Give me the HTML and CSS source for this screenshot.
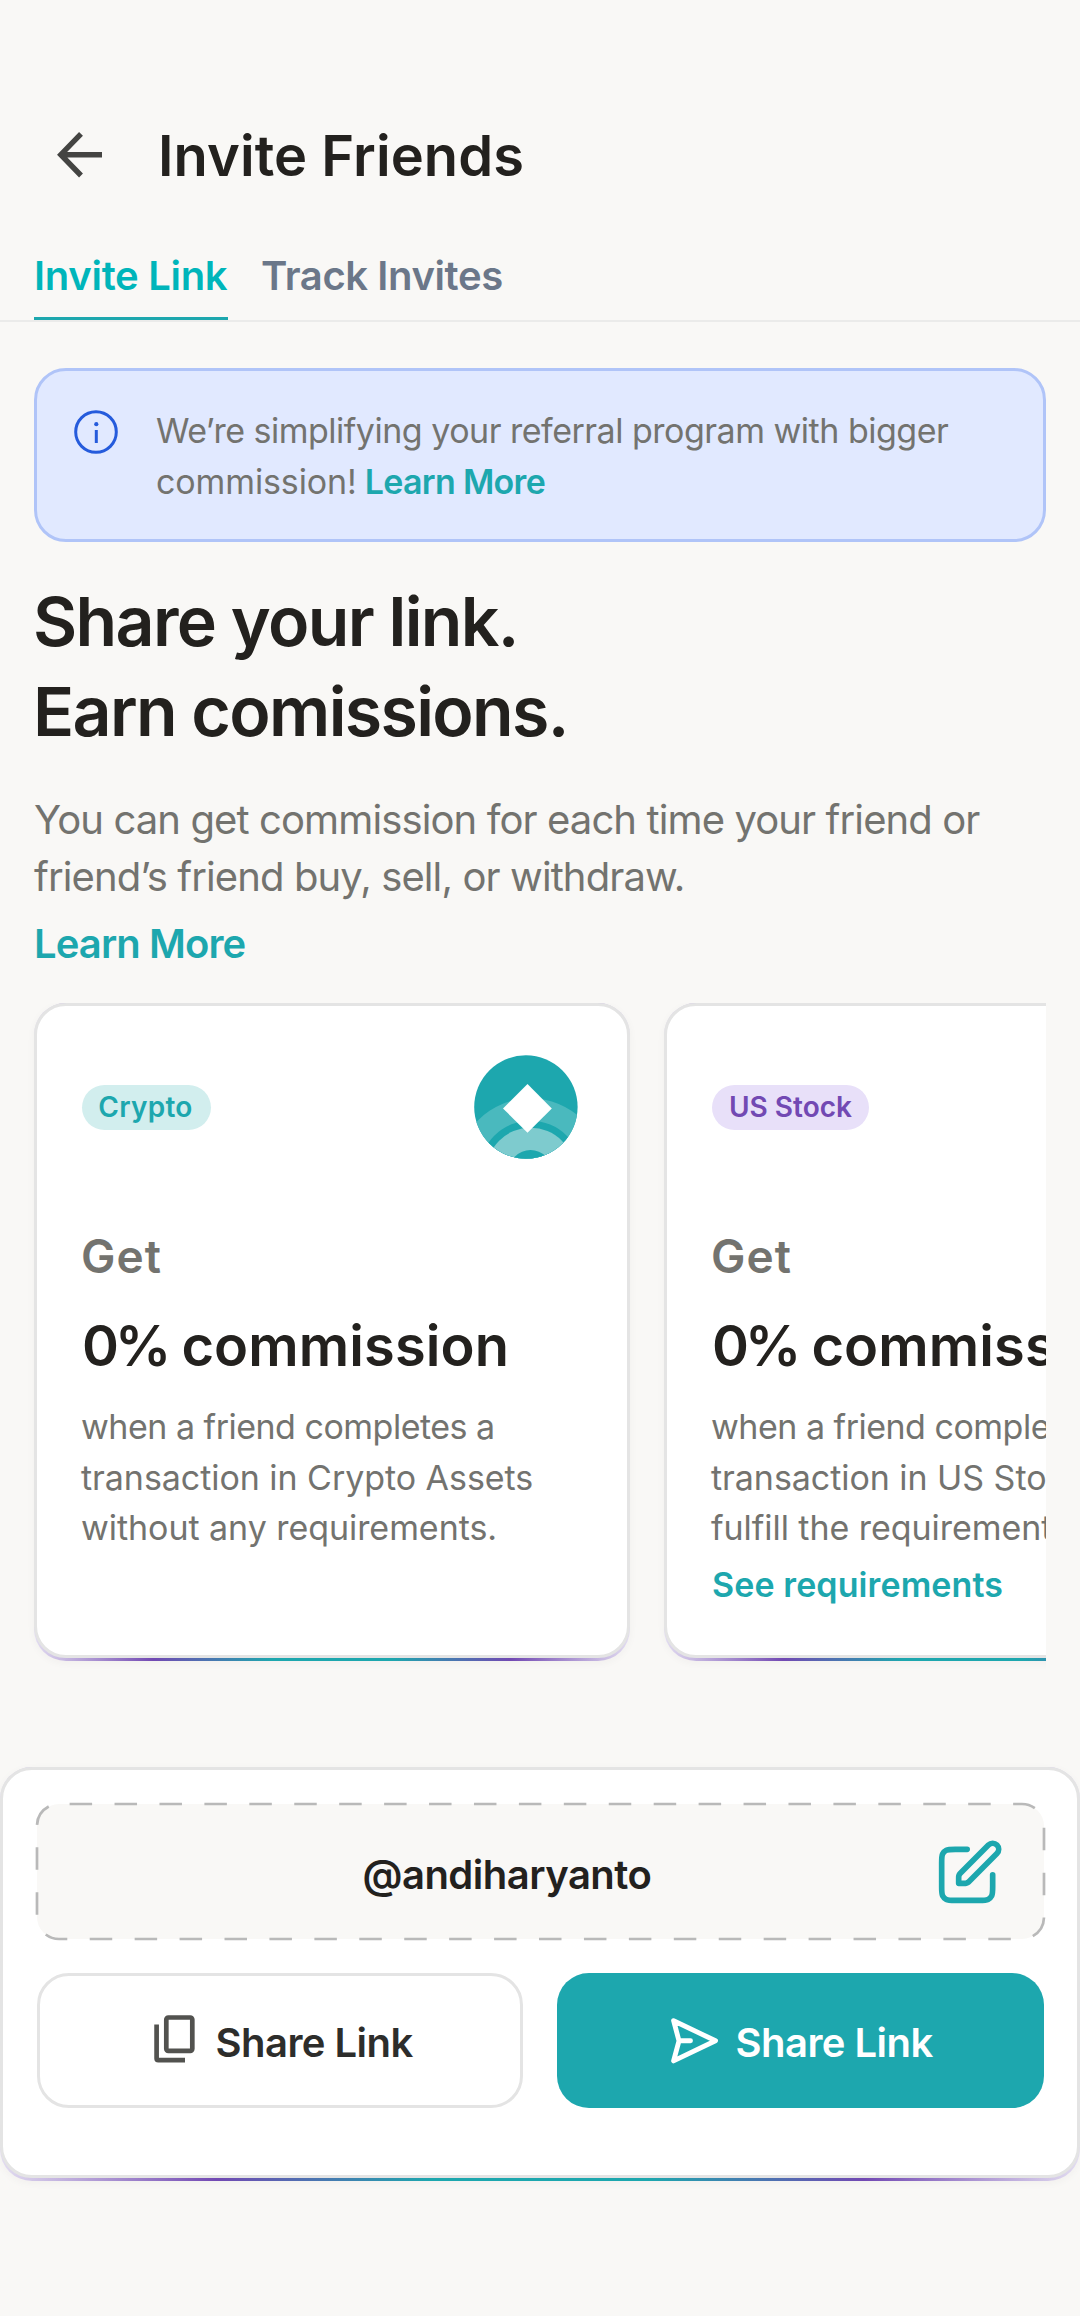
FILE: index.html
```
<!DOCTYPE html>
<html lang="en">
<head>
<meta charset="utf-8">
<title>Invite Friends</title>
<link rel="stylesheet" href="styles.css">
</head>
<body>
<header class="header">
  <svg class="back" viewBox="0 0 48 48" fill="none" stroke="#444442" stroke-width="5.4"><path d="M47 24.700H6M26 3.900 5.800 24.700 26 45.500"/></svg>
  <h1 class="title">Invite Friends</h1>
</header>

<nav class="tabs">
  <a class="tab tab-active">Invite Link</a>
  <a class="tab tab-track">Track Invites</a>
</nav>

<main class="content">
  <section class="banner">
    <svg class="info" viewBox="0 0 48 48" fill="none" stroke="#255bdc" stroke-width="3"><circle cx="24" cy="24" r="20.300"/><path d="M24.300 22v13"/><circle cx="24.300" cy="16.200" r="2.100" fill="#255bdc" stroke="none"/></svg>
    <p class="banner-text">We’re simplifying your referral program with bigger<br><span class="banner-end">commission!</span><a class="link banner-link">Learn More</a></p>
  </section>

  <h2 class="headline">Share your link.<br>Earn comissions.</h2>
  <p class="lead">You can get commission for each time your friend or<br>friend’s friend buy, sell, or withdraw.</p>
  <a class="link lead-link">Learn More</a>

  <section class="cards">
    <article class="edge card-edge">
      <div class="card">
        <div class="card-top">
          <span class="badge badge-crypto">Crypto</span>
          <svg class="coin" viewBox="0 0 104 104">
            <defs><clipPath id="disc"><circle cx="51.900" cy="52" r="51.700"/></clipPath></defs>
            <g clip-path="url(#disc)">
              <rect width="104" height="104" fill="#1da7ae"/>
              <circle cx="56.500" cy="117" r="73.700" fill="#4ab9be"/>
              <circle cx="56.500" cy="117" r="51.300" fill="#1da7ae"/>
              <circle cx="56.500" cy="117" r="44.300" fill="#7ecbce"/>
              <circle cx="56.500" cy="117" r="21.900" fill="#1da7ae"/>
            </g>
            <path d="M53.500 29 77.800 53.400 53.500 77.800 29 53.400Z" fill="#fff"/>
          </svg>
        </div>
        <p class="get">Get</p>
        <p class="rate"><span class="percent">0%</span> commission</p>
        <p class="desc"><span class="desc-first">when a friend completes a</span><br>transaction in Crypto Assets<br>without any requirements.</p>
      </div>
    </article>
    <article class="edge card-edge">
      <div class="card">
        <div class="card-top">
          <span class="badge badge-stock">US Stock</span>
        </div>
        <p class="get">Get</p>
        <p class="rate"><span class="percent">0%</span> commission</p>
        <p class="desc"><span class="desc-first">when a friend completes a</span><br>transaction in US Stocks and<br>fulfill the requirements.</p>
        <a class="link req">See requirements</a>
      </div>
    </article>
  </section>
</main>

<footer class="edge sheet-edge">
  <div class="sheet">
    <div class="handle">
      <svg class="dashes" viewBox="0 0 1011 139" fill="none"><rect x="2" y="2" width="1007" height="135" rx="22" stroke="#b9b9b9" stroke-width="2.700" stroke-dasharray="22.500 22.430" stroke-dashoffset="-10.600"/></svg>
      <span class="name">@andiharyanto</span>
      <svg class="edit" viewBox="0 0 24 24" fill="none" stroke="#1da7ae" stroke-width="2" stroke-linecap="round" stroke-linejoin="round"><path d="M11 4H6.800C5.120 4 4.280 4 3.638 4.327a3 3 0 0 0-1.311 1.311C2 6.280 2 7.120 2 8.800v8.400c0 1.680 0 2.520.327 3.162a3 3 0 0 0 1.311 1.311C4.280 22 5.120 22 6.800 22h8.400c1.680 0 2.520 0 3.162-.327a3 3 0 0 0 1.311-1.311C20 19.720 20 18.880 20 17.200V13M8 16h1.675c.489 0 .733 0 .963-.055a2 2 0 0 0 .579-.24c.201-.123.374-.296.720-.642L21.500 5.500a2.121 2.121 0 0 0-3-3l-9.563 9.563c-.346.346-.519.519-.642.720a2 2 0 0 0-.24.579c-.055.230-.055.474-.055.963V16z"/></svg>
    </div>
    <div class="actions">
      <button class="btn btn-outline">
        <svg class="copy" viewBox="0 0 42 48" fill="none" stroke="#52524f" stroke-width="4.700"><rect x="12.300" y="2.500" width="26" height="33.300" rx="2"/><path d="M2.600 9.500V43.500q0 1.700 1.700 1.700H31"/></svg>
        <span>Share Link</span>
      </button>
      <button class="btn btn-fill">
        <svg class="send" viewBox="0 0 50 46" fill="none" stroke="#fff" stroke-width="4.900" stroke-linecap="round" stroke-linejoin="round"><path d="M10 22.800H21.500M4.600 2.700 46.500 22.800 4.600 42.900 10 22.800Z"/></svg>
        <span>Share Link</span>
      </button>
    </div>
  </div>
</footer>
</body>
</html>
```
FILE: styles.css
```
* { box-sizing: border-box; margin: 0; padding: 0; }
html, body { height: 2316px; overflow: hidden; }
body {
  width: 1080px;
  background: #f9f8f6;
  color: #23211e;
  font-family: Inter, "Liberation Sans", sans-serif;
}
svg { display: block; flex: none; }

.header { display: flex; align-items: center; height: 192px; padding: 120px 0 0 55px; }
.back { width: 48px; height: 48px; margin-bottom: 5px; }
.title { margin-left: 55px; font-size: 56px; line-height: 72px; font-weight: 600; letter-spacing: 0.08px; }

.tabs { display: flex; gap: 33px; height: 130px; padding: 56px 0 0 34px; border-bottom: 2px solid #ebebea; }
.tab { font-size: 40px; line-height: 56px; font-weight: 600; letter-spacing: -0.4px; color: #6b7789; }
.tab-active { width: 194px; height: 72px; white-space: nowrap; letter-spacing: -0.3px; border-bottom: 3px solid #1da7ae; color: #00b5ba; }

.content { padding: 46px 34px 0; }
.link { color: #1da7ae; font-weight: 600; }
.banner { display: flex; height: 174px; padding: 34px 0 0 35px; border: 3px solid #b0c4f8; border-radius: 32px; background: #e1e9ff; }
.info { width: 48px; height: 48px; margin-top: 3px; }
.banner-text { margin-left: 36px; font-size: 34px; line-height: 51px; letter-spacing: -0.5px; color: #73736f; white-space: nowrap; }
.banner-end { letter-spacing: -0.12px; }
.banner-link { margin-left: 8px; letter-spacing: -0.69px; }

.headline { margin: 34px 0 0 -1px; font-size: 68px; line-height: 90px; font-weight: 600; letter-spacing: -1.65px; }
.lead { margin-top: 35px; font-size: 40px; line-height: 57px; letter-spacing: -0.89px; color: #73736f; white-space: nowrap; }
.lead-link { display: block; margin-top: 10px; font-size: 40px; line-height: 57px; letter-spacing: -0.91px; }

.cards { display: flex; gap: 34px; margin: 31px 0 0 -10px; padding: 0 0 12px 10px; overflow: hidden; }
.edge {
  flex: none;
  padding-bottom: 3px;
  border-radius: 32px;
  background: linear-gradient(90deg, #e2dcf0, #7249b3 20%, #1da7ae 40%, #1da7ae 60%, #7249b3 80%, #e2dcf0);
  box-shadow: 0 2px 8px rgba(40, 36, 30, 0.04);
}
.card-edge { width: 596px; }
.card { height: 655px; padding: 49px 49px 0 45px; border: 3px solid #e4e4e4; border-radius: 32px; background: #fff; white-space: nowrap; }
.card-top { display: flex; align-items: center; justify-content: space-between; height: 104px; }
.coin { width: 104px; height: 104px; }
.badge { height: 45px; border-radius: 23px; font-size: 28px; line-height: 45px; font-weight: 600; text-align: center; }
.badge-crypto { width: 129px; padding-right: 2px; background: #d2eeee; color: #1da7ae; letter-spacing: 0.25px; }
.badge-stock { width: 157px; background: #e8e0f9; color: #7249b3; }
.get { margin: 67px 0 0 -1px; font-size: 46px; line-height: 60px; font-weight: 600; letter-spacing: 1px; color: #73736f; }
.rate { margin-top: 24px; font-size: 56px; line-height: 72px; font-weight: 600; letter-spacing: 0.1px; }
.percent { letter-spacing: -4px; }
.desc { margin: 20px 0 0 -1px; font-size: 34px; line-height: 50.5px; letter-spacing: -0.05px; color: #73736f; }
.desc-first { letter-spacing: -0.5px; }
.req { display: block; margin-top: 5px; font-size: 34px; line-height: 51px; letter-spacing: 0.1px; }

.sheet-edge { margin-top: 94px; }
.sheet { height: 411px; padding: 34px 33.5px 0; border: 3px solid #e4e4e4; border-radius: 32px; background: #fff; }
.handle { position: relative; display: flex; align-items: center; justify-content: space-between; height: 135px; padding: 0 40px 0 326px; border-radius: 22px; background: #f9f8f6; }
.dashes { position: absolute; left: -2px; top: -2px; width: 1011px; height: 139px; }
.name { margin-top: 6px; font-size: 40px; line-height: 56px; font-weight: 600; letter-spacing: -0.51px; }
.edit { width: 68px; height: 68px; }
.actions { display: grid; grid-template-columns: 1fr 1fr; gap: 34px; margin-top: 34px; }
.btn { display: flex; align-items: center; height: 135px; border: 0; border-radius: 32px; background: #fff; color: #2d2d2b; font: 600 40px/56px Inter, "Liberation Sans", sans-serif; letter-spacing: -0.53px; }
.btn-outline { padding-left: 114px; border: 3px solid #e4e4e4; gap: 20px; }
.btn-fill { padding-left: 112px; gap: 16.5px; background: #1da7ae; color: #fff; }
.btn span { margin-top: 4px; }
.copy { width: 42px; height: 48px; margin-bottom: 3px; }
.send { width: 50px; height: 46px; }
```
